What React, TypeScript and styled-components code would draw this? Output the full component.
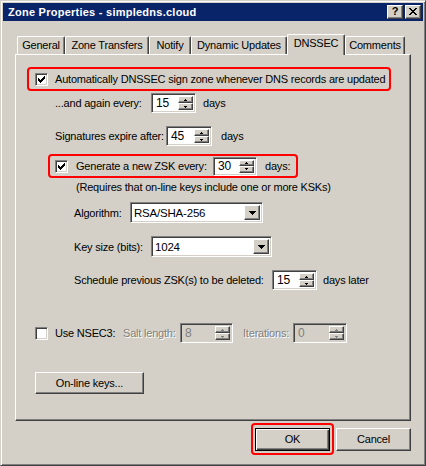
import React from "react";
import styled, { createGlobalStyle, css } from "styled-components";

const GlobalStyle = createGlobalStyle`
  html, body { margin: 0; padding: 0; background: #d4d0c8; }
  body {
    font-family: "Liberation Sans", Arial, sans-serif;
    font-size: 11px;
    color: #000;
    letter-spacing: -0.2px;
  }
  * { box-sizing: border-box; }
`;

const FACE = "#d4d0c8";
const SHADOW = "#808080";
const DARK = "#404040";

const raised = css`
  border: 1px solid;
  border-color: #fff ${DARK} ${DARK} #fff;
  box-shadow: inset -1px -1px ${SHADOW};
  background: ${FACE};
`;

const sunken = css`
  border: 1px solid;
  border-color: ${SHADOW} #fff #fff ${SHADOW};
  box-shadow: inset 1px 1px ${DARK}, inset -1px -1px ${FACE};
`;

const Window = styled.div`
  width: 426px;
  height: 466px;
  background: ${FACE};
  border: 1px solid;
  border-color: ${FACE} ${DARK} ${DARK} ${FACE};
  box-shadow: inset 1px 1px #fff, inset -1px -1px ${SHADOW};
  padding: 2px;
  display: flex;
  flex-direction: column;
`;

const TitleBar = styled.div`
  height: 18px;
  background: #0a246a;
  display: flex;
  align-items: center;
  padding: 0 2px 0 2px;
`;

const TitleText = styled.div`
  flex: 1;
  color: #fff;
  font-weight: bold;
  font-size: 11px;
  letter-spacing: 0.25px;
  padding-left: 3px;
  white-space: nowrap;
`;

const CaptionButton = styled.div`
  width: 16px;
  height: 14px;
  border: 1px solid;
  border-color: #fff ${DARK} ${DARK} #fff;
  box-shadow: inset -1px -1px ${SHADOW};
  background: ${FACE};
  display: flex;
  align-items: center;
  justify-content: center;
  margin-left: 2px;
  font-weight: bold;
  font-size: 11px;
  letter-spacing: 0;
  line-height: 1;
  padding-bottom: 1px;
`;

const Body = styled.div`
  flex: 1;
  display: flex;
  flex-direction: column;
  padding: 13px 12px 0 12px;
`;

const TabStrip = styled.div`
  height: 20px;
  display: flex;
  align-items: flex-end;
  padding-left: 2px;
`;

const Tab = styled.div<{ $w: number; $active?: boolean }>`
  position: relative;
  z-index: 1;
  width: ${(p) => p.$w}px;
  height: ${(p) => (p.$active ? 21 : 18)}px;
  margin-bottom: ${(p) => (p.$active ? -1 : 0)}px;
  border-top: 1px solid #fff;
  border-left: 1px solid #fff;
  border-right: 1px solid ${DARK};
  border-radius: 2px 2px 0 0;
  box-shadow: inset -1px 0 ${SHADOW};
  background: ${FACE};
  display: flex;
  justify-content: center;
  padding-top: 2px;
  white-space: nowrap;
`;

const Panel = styled.div`
  width: 396px;
  height: 367px;
  border: 1px solid;
  border-color: #fff ${DARK} ${DARK} #fff;
  box-shadow: inset -1px -1px ${SHADOW};
  display: flex;
  flex-direction: column;
`;

const Row = styled.div<{ $mt: number; $ml: number; $h: number }>`
  display: flex;
  align-items: center;
  margin-top: ${(p) => p.$mt}px;
  margin-left: ${(p) => p.$ml}px;
  height: ${(p) => p.$h}px;
  white-space: nowrap;
`;

const Highlight = styled.div<{ $mt: number; $ml: number; $w: number; $pl: number }>`
  display: flex;
  align-items: center;
  margin-top: ${(p) => p.$mt}px;
  margin-left: ${(p) => p.$ml}px;
  width: ${(p) => p.$w}px;
  height: 24px;
  padding-left: ${(p) => p.$pl}px;
  border: 2px solid #ff0000;
  border-radius: 4px;
  white-space: nowrap;
`;

const Label = styled.span<{ $w?: number; $gap?: number; $disabled?: boolean }>`
  display: inline-block;
  ${(p) => (p.$w ? `width: ${p.$w}px; flex: none;` : "")}
  margin-left: ${(p) => p.$gap ?? 0}px;
  color: ${(p) => (p.$disabled ? SHADOW : "#000")};
  ${(p) => (p.$disabled ? "text-shadow: 1px 1px #fff;" : "")}
`;

const CheckBoxBox = styled.div`
  width: 13px;
  height: 13px;
  flex: none;
  ${sunken};
  background: #fff;
  padding: 2px;
`;

const SpinBox = styled.div<{ $w: number; $h?: number; $gap?: number; $disabled?: boolean }>`
  width: ${(p) => p.$w}px;
  height: ${(p) => p.$h ?? 20}px;
  flex: none;
  margin-left: ${(p) => p.$gap ?? 0}px;
  ${sunken};
  background: ${(p) => (p.$disabled ? FACE : "#fff")};
  color: ${(p) => (p.$disabled ? SHADOW : "#000")};
  display: flex;
  padding: 2px;
`;

const SpinValue = styled.div`
  flex: 1;
  display: flex;
  align-items: center;
  padding-left: 2px;
  font-size: 12px;
`;

const SpinButtons = styled.div`
  width: 15px;
  display: flex;
  flex-direction: column;
`;

const SpinButton = styled.div`
  flex: 1;
  ${raised};
  display: flex;
  align-items: center;
  justify-content: center;
`;

const Combo = styled.div<{ $w: number }>`
  width: ${(p) => p.$w}px;
  height: 21px;
  flex: none;
  ${sunken};
  background: #fff;
  display: flex;
  padding: 2px;
`;

const ComboValue = styled.div`
  flex: 1;
  display: flex;
  align-items: center;
  padding-left: 1px;
  font-size: 11.5px;
`;

const ComboButton = styled.div`
  width: 16px;
  ${raised};
  display: flex;
  align-items: center;
  justify-content: center;
`;

const PushButton = styled.div<{ $w: number; $h: number; $default?: boolean }>`
  width: ${(p) => p.$w}px;
  height: ${(p) => p.$h}px;
  flex: none;
  display: flex;
  align-items: center;
  justify-content: center;
  background: ${FACE};
  border: 1px solid;
  ${(p) =>
    p.$default
      ? css`
          border-color: #000;
          box-shadow: inset 1px 1px #fff, inset -1px -1px ${DARK}, inset -2px -2px ${SHADOW};
        `
      : css`
          border-color: #fff ${DARK} ${DARK} #fff;
          box-shadow: inset -1px -1px ${SHADOW};
        `}
`;

const Footer = styled.div`
  display: flex;
  justify-content: flex-end;
  align-items: center;
  margin-top: 2px;
  gap: 2px;
`;

const OkHighlight = styled.div`
  width: 83px;
  height: 32px;
  border: 2px solid #ff0000;
  border-radius: 4px;
  display: flex;
  align-items: center;
  justify-content: center;
`;

const GlyphSvg = styled.svg`
  display: block;
  flex: none;
`;

const Glyph = ({ rows, color = "#000" }: { rows: string[]; color?: string }) => (
  <GlyphSvg width={rows[0].length} height={rows.length} shapeRendering="crispEdges">
    {rows.flatMap((r, y) =>
      r.split("").map((c, x) =>
        c === "X" ? <rect key={`${x}-${y}`} x={x} y={y} width={1} height={1} fill={color} /> : null
      )
    )}
  </GlyphSvg>
);

const CHECK = ["......X", ".....XX", "X...XXX", "XX.XXX.", "XXXXX..", ".XXX...", "..X...."];
const CLOSE = ["XX....XX", ".XX..XX.", "..XXXX..", "...XX...", "..XXXX..", ".XX..XX.", "XX....XX"];
const UP = ["..X..", ".XXX."];
const DOWN = [".XXX.", "..X.."];
const COMBO_DOWN = ["XXXXXXX", ".XXXXX.", "..XXX..", "...X..."];

const CheckBox = ({ checked }: { checked?: boolean }) => (
  <CheckBoxBox>{checked ? <Glyph rows={CHECK} /> : null}</CheckBoxBox>
);

const Spinner = ({
  value,
  w,
  gap,
  disabled,
  h,
}: {
  value: string;
  w: number;
  gap?: number;
  disabled?: boolean;
  h?: number;
}) => (
  <SpinBox $w={w} $gap={gap} $disabled={disabled} $h={h}>
    <SpinValue>{value}</SpinValue>
    <SpinButtons>
      <SpinButton>
        <Glyph rows={UP} color={disabled ? SHADOW : "#000"} />
      </SpinButton>
      <SpinButton>
        <Glyph rows={DOWN} color={disabled ? SHADOW : "#000"} />
      </SpinButton>
    </SpinButtons>
  </SpinBox>
);

const Dropdown = ({ value, w }: { value: string; w: number }) => (
  <Combo $w={w}>
    <ComboValue>{value}</ComboValue>
    <ComboButton>
      <Glyph rows={COMBO_DOWN} />
    </ComboButton>
  </Combo>
);

const tabs = [
  { label: "General", w: 48 },
  { label: "Zone Transfers", w: 84 },
  { label: "Notify", w: 42 },
  { label: "Dynamic Updates", w: 96 },
  { label: "DNSSEC", w: 58, active: true },
  { label: "Comments", w: 60 },
];

export default function App() {
  return (
    <>
      <GlobalStyle />
      <Window>
        <TitleBar>
          <TitleText>Zone Properties - simpledns.cloud</TitleText>
          <CaptionButton>?</CaptionButton>
          <CaptionButton>
            <Glyph rows={CLOSE} />
          </CaptionButton>
        </TitleBar>
        <Body>
          <TabStrip>
            {tabs.map((t) => (
              <Tab key={t.label} $w={t.w} $active={t.active}>
                {t.label}
              </Tab>
            ))}
          </TabStrip>
          <Panel>
            <Highlight $mt={12} $ml={11} $w={364} $pl={6}>
              <CheckBox checked />
              <Label $gap={7}>Automatically DNSSEC sign zone whenever DNS records are updated</Label>
            </Highlight>
            <Row $mt={2} $ml={39} $h={20}>
              <Label $w={96}>...and again every:</Label>
              <Spinner value="15" w={45} />
              <Label $gap={7}>days</Label>
            </Row>
            <Row $mt={13} $ml={39} $h={20}>
              <Label $w={111}>Signatures expire after:</Label>
              <Spinner value="45" w={46} />
              <Label $gap={9}>days</Label>
            </Row>
            <Highlight $mt={8} $ml={32} $w={250} $pl={5}>
              <CheckBox checked />
              <Label $gap={8} $w={137}>Generate a new ZSK every:</Label>
              <Spinner value="30" w={44} h={19} />
              <Label $gap={8}>days:</Label>
            </Highlight>
            <Row $mt={2} $ml={60} $h={13}>
              <Label>(Requires that on-line keys include one or more KSKs)</Label>
            </Row>
            <Row $mt={9} $ml={58} $h={21}>
              <Label $w={56}>Algorithm:</Label>
              <Dropdown value="RSA/SHA-256" w={133} />
            </Row>
            <Row $mt={13} $ml={58} $h={21}>
              <Label $w={77}>Key size (bits):</Label>
              <Dropdown value="1024" w={121} />
            </Row>
            <Row $mt={13} $ml={58} $h={20}>
              <Label $w={198}>Schedule previous ZSK(s) to be deleted:</Label>
              <Spinner value="15" w={45} />
              <Label $gap={6}>days later</Label>
            </Row>
            <Row $mt={33} $ml={19} $h={20}>
              <CheckBox />
              <Label $gap={7} $w={68}>Use NSEC3:</Label>
              <Label $w={57} $disabled>Salt length:</Label>
              <Spinner value="8" w={53} disabled />
              <Label $gap={10} $w={50} $disabled>Iterations:</Label>
              <Spinner value="0" w={54} disabled />
            </Row>
            <Row $mt={29} $ml={19} $h={22}>
              <PushButton $w={109} $h={22}>On-line keys...</PushButton>
            </Row>
          </Panel>
          <Footer>
            <OkHighlight>
              <PushButton $w={75} $h={23} $default>OK</PushButton>
            </OkHighlight>
            <PushButton $w={75} $h={23}>Cancel</PushButton>
          </Footer>
        </Body>
      </Window>
    </>
  );
}
